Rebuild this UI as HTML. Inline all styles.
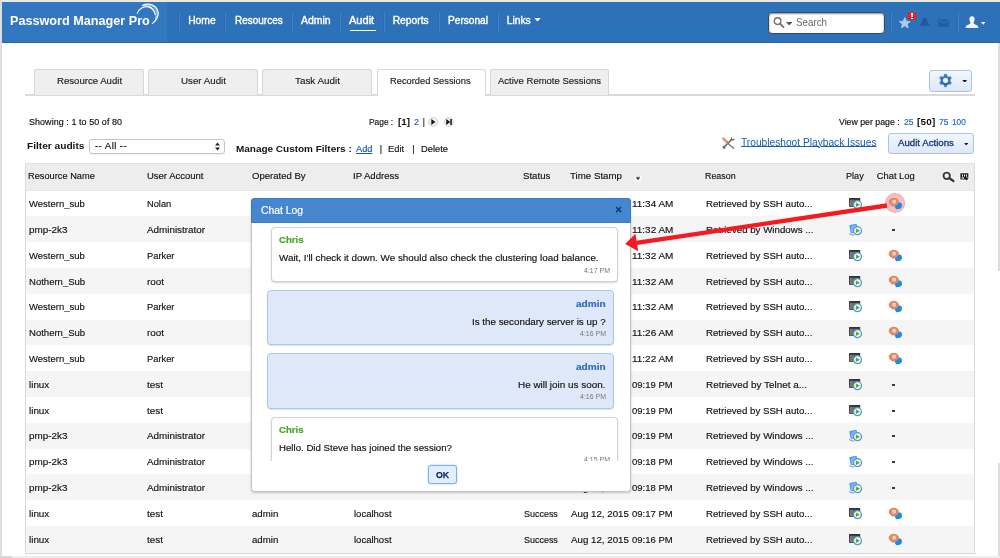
<!DOCTYPE html>
<html>
<head>
<meta charset="utf-8">
<title>Password Manager Pro</title>
<style>
*{box-sizing:border-box;margin:0;padding:0}
html,body{width:1000px;height:558px;overflow:hidden;background:#fff}
body{font-family:"Liberation Sans",sans-serif;font-size:9.1px;color:#111;position:relative}
#page{position:absolute;left:0;top:0;width:1000px;height:558px;overflow:hidden;will-change:transform}
.abs{position:absolute}
.vt{-webkit-text-stroke:.15px currentColor}
#frame-top{left:0;top:0;width:1000px;height:2px;background:#ece9e5}
#frame-left{left:0;top:0;width:2px;height:558px;background:#dedede}
#frame-r1{left:998px;top:43px;width:2px;height:228px;background:#dcdcdc}
#frame-r2{left:998px;top:463px;width:2px;height:95px;background:#dcdcdc}
#frame-b{left:0;top:556px;width:1000px;height:2px;background:#ededed}
#frame-b2{left:0;top:556px;width:12px;height:2px;background:#d8d8d8}
#hdr{left:2px;top:2px;width:998px;height:41px;background:#2d72b8;border-bottom:1px solid #2668ab}
#logo-bg{left:2px;top:2px;width:165px;height:40px;background:#3377c0}
.sep{position:absolute;top:12px;width:1px;height:19.5px;background:#3f80c6;box-shadow:-1px 0 0 #2a6bb0}
#audit-ul{left:349.5px;top:30px;width:26px;height:1px;background:#fff}
#search{left:768px;top:12px;width:117px;height:21.5px;background:#fff;border-radius:4px;border:1px solid #3b4a5a;box-shadow:inset 0 1px 2px rgba(0,0,0,.45)}
.tab{position:absolute;top:69px;height:26px;background:#efefef;border:1px solid #d6d6d6;border-bottom:none;border-radius:3px 3px 0 0}
.tab.act{background:#fff;height:27px;border-color:#d8d8d8}
#tabline{left:25px;top:94px;width:950px;height:1.6px;background:#dadada}
.btn{position:absolute;border-radius:2.5px;background:linear-gradient(#f3f7fd,#dde8f8);border:1px solid #a8c4e8;border-radius:3px}
#thead{left:26px;top:162.5px;width:948.5px;height:28px;background:#ededed;border-top:1.3px solid #e0e0e0;border-bottom:1px solid #e6e6e6}
#tbl-l{left:25px;top:162.5px;width:1px;height:391px;background:#d9d9d9}
#tbl-r{left:974.3px;top:162.5px;width:1.2px;height:391px;background:#dadada}
.row{position:absolute;left:26px;width:948.5px}
.row.alt{background:#f5f5f5}
.ic{position:absolute}
.hl{position:absolute;width:20.2px;height:20.2px;border-radius:50%;background:#f9bcc0;border:1.2px dotted #ee8e95}
#dlg{left:250.8px;top:197.5px;width:380.6px;height:294.2px;background:#fff;border:1.2px solid #c2c2c2;border-radius:3.5px;box-shadow:0 1px 2.5px rgba(0,0,0,.2)}
#dlg-h{left:251px;top:197.5px;width:380px;height:25px;background:#4587cf;border:1px solid #3d7cc4;border-radius:3px 3px 0 0}
.bub{position:absolute;border-radius:4px}
.bub.w{background:#fff;border:1px solid #d2d2d2;box-shadow:0 1px 2px rgba(0,0,0,.16)}
.bub.b{background:#dfe8f8;border:1px solid #a9c6ec;box-shadow:0 1px 1px rgba(0,0,0,.12)}
#ok{left:427.5px;top:465.3px;width:29.6px;height:19.2px;background:#e4eefb;border:1px solid #7db1ea;border-radius:3px;box-shadow:0 0 2px #8fbdf0}

</style>
</head>
<body>
<div id="page">
<svg width="0" height="0" style="position:absolute">
<defs>
<linearGradient id="g-mon" x1="0" y1="0" x2="0" y2="1"><stop offset="0" stop-color="#2f2f2f"/><stop offset="1" stop-color="#5a5a5a"/></linearGradient>
<linearGradient id="g-scr" x1="0" y1="0" x2="1" y2="0"><stop offset="0" stop-color="#808080"/><stop offset="1" stop-color="#444"/></linearGradient>
<linearGradient id="g-win" x1="0" y1="0" x2="1" y2="1"><stop offset="0" stop-color="#4aa3f0"/><stop offset="1" stop-color="#b6dcfa"/></linearGradient>
<g id="i-pl">
<circle cx="9.5" cy="7.7" r="4" fill="#f3faee" stroke="#4f94dc" stroke-width="1.2"/>
<path d="M7.9 5.4 L12 7.7 L7.9 10 Z" fill="#4bb022"/>
</g>
<g id="i-ssh">
<rect x="1" y="1" width="11.2" height="9" rx=".6" fill="url(#g-mon)"/>
<rect x="2" y="2.8" width="9.2" height="6.2" fill="url(#g-scr)"/>
<use href="#i-pl"/>
</g>
<g id="i-win">
<path d="M1.6 10.6 Q3.2 12.2 5.6 11.8" fill="none" stroke="#9aa3ad" stroke-width="1.3" stroke-linecap="round"/>
<path d="M1.8 2.6 L8.2 1.2 L9.3 8 L3.2 9.8 Z" fill="url(#g-win)" stroke="#3f8fe2" stroke-width=".9" stroke-linejoin="round"/>
<use href="#i-pl"/>
</g>
<g id="i-chat">
<ellipse cx="11.3" cy="8.6" rx="3.7" ry="3.4" fill="#1f8ae6"/>
<path d="M9.4 10.6 L8.6 12.6 L12.4 11.6 Z" fill="#1f8ae6"/>
<ellipse cx="6.8" cy="4.8" rx="5.1" ry="4" fill="#db8a62"/>
<path d="M3.8 7.2 L5.8 10 L7.8 8.2 Z" fill="#db8a62"/>
<rect x="5.2" y="2.8" width="3.7" height="3.8" rx=".9" fill="#f4c8bc"/>
</g>
</defs>
</svg>

<div class="abs" id="hdr"></div>
<div class="abs" id="logo-bg"></div>
<div class="abs" id="frame-top"></div>
<div class="abs" id="frame-left"></div>
<div class="abs" id="frame-r1"></div>
<div class="abs" id="frame-r2"></div>
<div class="abs" id="frame-b" style="z-index:5"></div>
<div class="abs" id="frame-b2" style="z-index:5"></div>
<svg class="abs" style="left:0;top:0" width="170" height="30" viewBox="0 0 170 30" fill="none" stroke="#fff" stroke-linecap="round">
<path d="M137.3 13.3 C138.8 8.6 143.8 6 148.4 6.9 C152 7.8 154.4 10.8 155.2 14.6" stroke-width="1.1"/>
<path d="M142.4 5.4 C146.2 3.4 152 3.5 155.4 7 C159.6 11.6 159.4 17.8 152.3 23.6" stroke-width="1.15"/>
<path d="M143.4 6 C147.4 4.4 151.8 5 154.6 8.2 C157.8 12 158 16.4 155.4 20" stroke-width=".8" opacity=".8"/>
<path d="M145 6.4 C148.6 5.6 151.6 6.8 153.6 9.6 C155.8 12.6 156.4 15.4 155.6 18.4" stroke-width=".8" opacity=".65"/>
</svg>

<div class="sep" style="left:179px"></div>
<div class="sep" style="left:225px"></div>
<div class="sep" style="left:292px"></div>
<div class="sep" style="left:340px"></div>
<div class="sep" style="left:384px"></div>
<div class="sep" style="left:439px"></div>
<div class="sep" style="left:498px"></div>
<svg class="abs" style="left:534.2px;top:18.4px" width="7" height="4" viewBox="0 0 8 5"><path d="M0 0H8L4 4.5Z" fill="#fff"/></svg>
<div class="abs" id="audit-ul"></div>

<div class="abs" id="search"></div>
<svg class="abs" style="left:772.6px;top:16px" width="12" height="13" viewBox="0 0 13 14"><circle cx="5" cy="5.5" r="3.6" fill="none" stroke="#707070" stroke-width="1.5"/><path d="M7.6 8.3 L11.3 12" stroke="#707070" stroke-width="2" stroke-linecap="round"/></svg>
<svg class="abs" style="left:786px;top:21.6px" width="6.4" height="3.6" viewBox="0 0 7 4"><path d="M0 0H7L3.5 4Z" fill="#555"/></svg>
<div class="sep" style="left:891px"></div>
<svg class="abs" style="left:899.4px;top:16.8px" width="11.6" height="11.6" viewBox="0 0 14 14"><path d="M7 0.5 L8.9 5 L13.6 5.4 L10 8.5 L11.1 13.2 L7 10.7 L2.9 13.2 L4 8.5 L0.4 5.4 L5.1 5 Z" fill="#a9cbef" stroke="#c9dff5" stroke-width=".7"/></svg>
<div class="abs" style="left:908px;top:12px;width:8px;height:8px;background:#ee1c24"></div>
<div class="abs" style="left:911px;top:13px;width:2px;height:4px;background:#fff"></div>
<div class="abs" style="left:911px;top:18px;width:2px;height:1px;background:#fff"></div>
<svg class="abs" style="left:918.8px;top:16.8px" width="11.4" height="10.6" viewBox="0 0 13 12"><path d="M6.5 0.5 C4 1 3.5 3.5 3.3 6 L1 9 H12 L9.7 6 C9.5 3.5 9 1 6.5 0.5Z" fill="#1e5a9b"/><path d="M5 9.5 H8 L6.5 11.5Z" fill="#1e5a9b"/><path d="M0.5 9.5 H12.5" stroke="#1e5a9b" stroke-width="1"/></svg>
<svg class="abs" style="left:938px;top:19.4px" width="11.4" height="7.8" viewBox="0 0 13 9"><rect x="0" y="0" width="13" height="9" fill="#215f9f"/><path d="M0.5 1 L6.5 5 L12.5 1" fill="none" stroke="#2f74ba" stroke-width="1.2"/></svg>
<div class="sep" style="left:958px"></div>
<svg class="abs" style="left:965px;top:16px" width="14" height="12" viewBox="0 0 14 12"><path d="M7 0.3 C9 0.3 9.8 1.8 9.6 3.6 C9.4 5.2 8.8 6.2 8.4 6.8 C8.6 8 10.5 8.6 12 9.2 C13 9.7 13.3 10.5 13.3 12 H0.7 C0.7 10.5 1 9.7 2 9.2 C3.5 8.6 5.4 8 5.6 6.8 C5.2 6.2 4.6 5.2 4.4 3.6 C4.2 1.8 5 0.3 7 0.3Z" fill="#f6f3ee"/></svg>
<svg class="abs" style="left:981px;top:22.4px" width="4.4" height="2.7" viewBox="0 0 5 3"><path d="M0 0H5L2.5 3Z" fill="#fff"/></svg>

<!-- tabs -->
<div class="abs" id="tabline"></div>
<div class="tab" style="left:34.4px;width:109.6px"></div>
<div class="tab" style="left:148.4px;width:110px"></div>
<div class="tab" style="left:262.4px;width:110px"></div>
<div class="tab act" style="left:376.6px;width:109.4px"></div>
<div class="tab" style="left:490px;width:118.8px"></div>

<div class="btn" style="left:929px;top:70px;width:43px;height:21.6px"></div>
<svg class="abs" style="left:938.2px;top:73.3px" width="15" height="15" viewBox="-7.5 -7.5 15 15">
<defs><linearGradient id="g-gear" x1="0" y1="0" x2="0" y2="1"><stop offset="0" stop-color="#5b9ce2"/><stop offset="1" stop-color="#1d5cab"/></linearGradient></defs>
<g fill="url(#g-gear)">
<circle r="4.9"/>
<g id="tooth"><rect x="-1.6" y="-6.7" width="3.2" height="3.4" rx="1"/></g>
<use href="#tooth" transform="rotate(60)"/><use href="#tooth" transform="rotate(120)"/><use href="#tooth" transform="rotate(180)"/><use href="#tooth" transform="rotate(240)"/><use href="#tooth" transform="rotate(300)"/>
</g>
<circle r="2.5" fill="#fff"/>
</svg>
<svg class="abs" style="left:961.6px;top:79.6px" width="5.4" height="2.8" viewBox="0 0 5 3"><path d="M0 0H5L2.5 3Z" fill="#111"/></svg>

<!-- info line -->
<svg class="abs" style="left:428px;top:117px" width="10" height="10" viewBox="0 0 10 10"><circle cx="5" cy="5" r="4.5" fill="#f1f1f1" stroke="#c9c9c9" stroke-width=".8"/><path d="M3.3 2 L7.4 5 L3.3 8Z" fill="#111"/></svg>
<svg class="abs" style="left:444px;top:117px" width="10" height="10" viewBox="0 0 10 10"><circle cx="5" cy="5" r="4.5" fill="#f1f1f1" stroke="#c9c9c9" stroke-width=".8"/><path d="M2.3 2 L6.2 5 L2.3 8Z" fill="#111"/><rect x="6.3" y="2" width="1.5" height="6" fill="#111"/></svg>

<!-- filter line -->
<div class="abs" style="left:89px;top:139px;width:136px;height:15px;background:#fff;border:1px solid #c4c4c4;border-radius:3px;box-shadow:0 1px 0 rgba(0,0,0,.05)"></div>
<svg class="abs" style="left:215px;top:142px" width="5" height="9" viewBox="0 0 5 9"><path d="M0 3.6H5L2.5 0.4Z M0 5.4H5L2.5 8.6Z" fill="#222"/></svg>
<svg class="abs" style="left:721px;top:136px" width="15" height="14" viewBox="0 0 15 14" fill="none" stroke-linecap="round">
<path d="M10.9 3.2 L3.4 10.8" stroke="#5f5f5f" stroke-width="1.5"/>
<path d="M10.4 1.8 L10.2 3.6 L11.8 4 M13.2 3.2 L11.8 4" stroke="#6a6a6a" stroke-width="1.2"/>
<path d="M2.2 10.4 L3.6 10.8 L3.8 12.4 M2.4 12.2 L2.2 10.4" stroke="#6a6a6a" stroke-width="1.2"/>
<path d="M6.8 7.2 L12.6 12.2" stroke="#777" stroke-width="1.4"/>
<path d="M2.4 2.6 L6.2 6.4" stroke="#e97b52" stroke-width="2.7"/>
<path d="M2.3 2.5 L2.9 3.1" stroke="#f7c4b2" stroke-width="1.1"/>
<path d="M4.2 4.6 L4.9 5.3" stroke="#c9c9c9" stroke-width="2.2" stroke-linecap="butt"/>
</svg>
<div class="btn" style="left:888.3px;top:132.6px;width:86px;height:21.4px"></div>
<svg class="abs" style="left:963.6px;top:142.6px" width="4.4" height="2.6" viewBox="0 0 5 3"><path d="M0 0H5L2.5 3Z" fill="#222"/></svg>

<!-- table -->
<div class="abs" id="thead"></div>
<svg class="abs" style="left:633.6px;top:173.6px" width="8" height="8" viewBox="0 0 8 8"><ellipse cx="4" cy="4.2" rx="3.6" ry="3.6" fill="#fff" opacity=".9"/><rect x="2" y="1.7" width="4" height=".7" fill="#aaa"/><path d="M1.8 3.2 H6.2 L4 6.2Z" fill="#333"/></svg>
<svg class="abs" style="left:941px;top:169.6px" width="15" height="14" viewBox="0 0 15 14"><g stroke="#fff" stroke-width="3.6" opacity=".85" fill="none" stroke-linecap="round"><circle cx="5.7" cy="5.8" r="3.2"/><path d="M8.3 8.2 L12.6 11.2"/></g><circle cx="5.7" cy="5.8" r="3.2" fill="none" stroke="#3a3a3a" stroke-width="1.95"/><path d="M8.4 8.2 L12.4 11" stroke="#3a3a3a" stroke-width="2.5" stroke-linecap="round"/></svg>
<svg class="abs" style="left:958.8px;top:172px" width="11" height="10" viewBox="0 0 11 10"><rect x=".4" y=".4" width="10" height="8.6" rx="1.6" fill="#fff" opacity=".85"/><path d="M1.4 1.3 H9.4 V5.6 H7.4 V7.6 H1.4Z" fill="#1a1a1a"/><path d="M5.6 6 H9.8 L7.7 8.4Z" fill="#1a1a1a"/><rect x="3" y="2.4" width="1" height="2.2" fill="#eee"/><rect x="5" y="2.4" width="1" height="2.2" fill="#eee"/><rect x="7" y="2.4" width="1" height="2.2" fill="#eee"/><rect x="2.6" y="5.4" width="2.4" height="1.2" fill="#eee"/></svg>

<div class="row" style="top:190.40px;height:25.80px"></div>
<div class="row alt" style="top:216.22px;height:25.80px"></div>
<div class="row" style="top:242.04px;height:25.80px"></div>
<div class="row alt" style="top:267.86px;height:25.80px"></div>
<div class="row" style="top:293.68px;height:25.80px"></div>
<div class="row alt" style="top:319.50px;height:25.80px"></div>
<div class="row" style="top:345.32px;height:25.80px"></div>
<div class="row alt" style="top:371.14px;height:25.80px"></div>
<div class="row" style="top:396.96px;height:25.80px"></div>
<div class="row alt" style="top:422.78px;height:25.80px"></div>
<div class="row" style="top:448.60px;height:25.80px"></div>
<div class="row alt" style="top:474.42px;height:25.80px"></div>
<div class="row" style="top:500.24px;height:25.80px"></div>
<div class="row alt" style="top:526.06px;height:27.00px"></div>
<div class="vt" style="position:absolute;left:28.50px;top:199.00px;font-size:9.4px;line-height:1;letter-spacing:0.000px;color:#111;white-space:nowrap;transform:scaleX(1.0125);transform-origin:0 50%;">Western_sub</div>
<div class="vt" style="position:absolute;left:147.10px;top:199.00px;font-size:9.4px;line-height:1;letter-spacing:0.000px;color:#111;white-space:nowrap;transform:scaleX(0.9875);transform-origin:0 50%;">Nolan</div>
<div class="vt" style="position:absolute;left:252.10px;top:199.00px;font-size:9.4px;line-height:1;letter-spacing:0.000px;color:#111;white-space:nowrap;transform:scaleX(1.0274);transform-origin:0 50%;">admin</div>
<div class="vt" style="position:absolute;left:353.60px;top:199.00px;font-size:9.4px;line-height:1;letter-spacing:0.000px;color:#111;white-space:nowrap;transform:scaleX(1.0147);transform-origin:0 50%;">localhost</div>
<div class="vt" style="position:absolute;left:523.70px;top:199.00px;font-size:9.4px;line-height:1;letter-spacing:0.000px;color:#111;white-space:nowrap;transform:scaleX(0.9553);transform-origin:0 50%;">Success</div>
<div class="vt" style="position:absolute;left:570.50px;top:199.00px;font-size:9.4px;line-height:1;letter-spacing:-0.000px;color:#111;white-space:nowrap;transform:scaleX(1.0387);transform-origin:0 50%;">Aug 12, 2015</div>
<div class="vt" style="position:absolute;left:632.30px;top:199.00px;font-size:9.4px;line-height:1;letter-spacing:0.000px;color:#111;white-space:nowrap;transform:scaleX(1.0624);transform-origin:0 50%;">11:34 AM</div>
<div class="vt" style="position:absolute;left:706.10px;top:199.00px;font-size:9.4px;line-height:1;letter-spacing:0.000px;color:#111;white-space:nowrap;transform:scaleX(1.0310);transform-origin:0 50%;">Retrieved by SSH auto...</div>
<svg class="ic" style="left:848px;top:197px" width="15" height="13" viewBox="0 0 15 13"><use href="#i-ssh"/></svg>
<div class="hl" style="left:884.7px;top:193.0px"></div>
<svg class="ic" style="left:887px;top:197px" width="16" height="14" viewBox="0 0 16 14"><use href="#i-chat"/></svg>
<div class="vt" style="position:absolute;left:28.50px;top:225.00px;font-size:9.4px;line-height:1;letter-spacing:0.000px;color:#111;white-space:nowrap;transform:scaleX(1.0540);transform-origin:0 50%;">pmp-2k3</div>
<div class="vt" style="position:absolute;left:147.10px;top:225.00px;font-size:9.4px;line-height:1;letter-spacing:-0.000px;color:#111;white-space:nowrap;transform:scaleX(1.0502);transform-origin:0 50%;">Administrator</div>
<div class="vt" style="position:absolute;left:252.10px;top:225.00px;font-size:9.4px;line-height:1;letter-spacing:0.000px;color:#111;white-space:nowrap;transform:scaleX(1.0274);transform-origin:0 50%;">admin</div>
<div class="vt" style="position:absolute;left:353.60px;top:225.00px;font-size:9.4px;line-height:1;letter-spacing:0.000px;color:#111;white-space:nowrap;transform:scaleX(1.0147);transform-origin:0 50%;">localhost</div>
<div class="vt" style="position:absolute;left:523.70px;top:225.00px;font-size:9.4px;line-height:1;letter-spacing:0.000px;color:#111;white-space:nowrap;transform:scaleX(0.9553);transform-origin:0 50%;">Success</div>
<div class="vt" style="position:absolute;left:570.50px;top:225.00px;font-size:9.4px;line-height:1;letter-spacing:-0.000px;color:#111;white-space:nowrap;transform:scaleX(1.0387);transform-origin:0 50%;">Aug 12, 2015</div>
<div class="vt" style="position:absolute;left:632.30px;top:225.00px;font-size:9.4px;line-height:1;letter-spacing:0.000px;color:#111;white-space:nowrap;transform:scaleX(1.0624);transform-origin:0 50%;">11:32 AM</div>
<div class="vt" style="position:absolute;left:706.10px;top:225.00px;font-size:9.4px;line-height:1;letter-spacing:0.000px;color:#111;white-space:nowrap;transform:scaleX(1.0351);transform-origin:0 50%;">Retrieved by Windows ...</div>
<svg class="ic" style="left:848px;top:223px" width="15" height="13" viewBox="0 0 15 13"><use href="#i-win"/></svg>
<div class="abs" style="left:892.2px;top:229.2px;width:3.2px;height:1.5px;background:#3a3a3a"></div>
<div class="vt" style="position:absolute;left:28.50px;top:251.00px;font-size:9.4px;line-height:1;letter-spacing:0.000px;color:#111;white-space:nowrap;transform:scaleX(1.0125);transform-origin:0 50%;">Western_sub</div>
<div class="vt" style="position:absolute;left:147.10px;top:251.00px;font-size:9.4px;line-height:1;letter-spacing:0.000px;color:#111;white-space:nowrap;transform:scaleX(0.9939);transform-origin:0 50%;">Parker</div>
<div class="vt" style="position:absolute;left:252.10px;top:251.00px;font-size:9.4px;line-height:1;letter-spacing:0.000px;color:#111;white-space:nowrap;transform:scaleX(1.0274);transform-origin:0 50%;">admin</div>
<div class="vt" style="position:absolute;left:353.60px;top:251.00px;font-size:9.4px;line-height:1;letter-spacing:0.000px;color:#111;white-space:nowrap;transform:scaleX(1.0147);transform-origin:0 50%;">localhost</div>
<div class="vt" style="position:absolute;left:523.70px;top:251.00px;font-size:9.4px;line-height:1;letter-spacing:0.000px;color:#111;white-space:nowrap;transform:scaleX(0.9553);transform-origin:0 50%;">Success</div>
<div class="vt" style="position:absolute;left:570.50px;top:251.00px;font-size:9.4px;line-height:1;letter-spacing:-0.000px;color:#111;white-space:nowrap;transform:scaleX(1.0387);transform-origin:0 50%;">Aug 12, 2015</div>
<div class="vt" style="position:absolute;left:632.30px;top:251.00px;font-size:9.4px;line-height:1;letter-spacing:0.000px;color:#111;white-space:nowrap;transform:scaleX(1.0624);transform-origin:0 50%;">11:32 AM</div>
<div class="vt" style="position:absolute;left:706.10px;top:251.00px;font-size:9.4px;line-height:1;letter-spacing:0.000px;color:#111;white-space:nowrap;transform:scaleX(1.0310);transform-origin:0 50%;">Retrieved by SSH auto...</div>
<svg class="ic" style="left:848px;top:249px" width="15" height="13" viewBox="0 0 15 13"><use href="#i-ssh"/></svg>
<svg class="ic" style="left:887px;top:249px" width="16" height="14" viewBox="0 0 16 14"><use href="#i-chat"/></svg>
<div class="vt" style="position:absolute;left:28.50px;top:277.00px;font-size:9.4px;line-height:1;letter-spacing:0.000px;color:#111;white-space:nowrap;transform:scaleX(1.0163);transform-origin:0 50%;">Nothern_Sub</div>
<div class="vt" style="position:absolute;left:147.10px;top:277.00px;font-size:9.4px;line-height:1;letter-spacing:0.000px;color:#111;white-space:nowrap;transform:scaleX(1.0608);transform-origin:0 50%;">root</div>
<div class="vt" style="position:absolute;left:252.10px;top:277.00px;font-size:9.4px;line-height:1;letter-spacing:0.000px;color:#111;white-space:nowrap;transform:scaleX(1.0274);transform-origin:0 50%;">admin</div>
<div class="vt" style="position:absolute;left:353.60px;top:277.00px;font-size:9.4px;line-height:1;letter-spacing:0.000px;color:#111;white-space:nowrap;transform:scaleX(1.0147);transform-origin:0 50%;">localhost</div>
<div class="vt" style="position:absolute;left:523.70px;top:277.00px;font-size:9.4px;line-height:1;letter-spacing:0.000px;color:#111;white-space:nowrap;transform:scaleX(0.9553);transform-origin:0 50%;">Success</div>
<div class="vt" style="position:absolute;left:570.50px;top:277.00px;font-size:9.4px;line-height:1;letter-spacing:-0.000px;color:#111;white-space:nowrap;transform:scaleX(1.0387);transform-origin:0 50%;">Aug 12, 2015</div>
<div class="vt" style="position:absolute;left:632.30px;top:277.00px;font-size:9.4px;line-height:1;letter-spacing:0.000px;color:#111;white-space:nowrap;transform:scaleX(1.0624);transform-origin:0 50%;">11:32 AM</div>
<div class="vt" style="position:absolute;left:706.10px;top:277.00px;font-size:9.4px;line-height:1;letter-spacing:0.000px;color:#111;white-space:nowrap;transform:scaleX(1.0310);transform-origin:0 50%;">Retrieved by SSH auto...</div>
<svg class="ic" style="left:848px;top:275px" width="15" height="13" viewBox="0 0 15 13"><use href="#i-ssh"/></svg>
<svg class="ic" style="left:887px;top:275px" width="16" height="14" viewBox="0 0 16 14"><use href="#i-chat"/></svg>
<div class="vt" style="position:absolute;left:28.50px;top:302.00px;font-size:9.4px;line-height:1;letter-spacing:0.000px;color:#111;white-space:nowrap;transform:scaleX(1.0125);transform-origin:0 50%;">Western_sub</div>
<div class="vt" style="position:absolute;left:147.10px;top:302.00px;font-size:9.4px;line-height:1;letter-spacing:0.000px;color:#111;white-space:nowrap;transform:scaleX(0.9939);transform-origin:0 50%;">Parker</div>
<div class="vt" style="position:absolute;left:252.10px;top:302.00px;font-size:9.4px;line-height:1;letter-spacing:0.000px;color:#111;white-space:nowrap;transform:scaleX(1.0274);transform-origin:0 50%;">admin</div>
<div class="vt" style="position:absolute;left:353.60px;top:302.00px;font-size:9.4px;line-height:1;letter-spacing:0.000px;color:#111;white-space:nowrap;transform:scaleX(1.0147);transform-origin:0 50%;">localhost</div>
<div class="vt" style="position:absolute;left:523.70px;top:302.00px;font-size:9.4px;line-height:1;letter-spacing:0.000px;color:#111;white-space:nowrap;transform:scaleX(0.9553);transform-origin:0 50%;">Success</div>
<div class="vt" style="position:absolute;left:570.50px;top:302.00px;font-size:9.4px;line-height:1;letter-spacing:-0.000px;color:#111;white-space:nowrap;transform:scaleX(1.0387);transform-origin:0 50%;">Aug 12, 2015</div>
<div class="vt" style="position:absolute;left:632.30px;top:302.00px;font-size:9.4px;line-height:1;letter-spacing:0.000px;color:#111;white-space:nowrap;transform:scaleX(1.0624);transform-origin:0 50%;">11:32 AM</div>
<div class="vt" style="position:absolute;left:706.10px;top:302.00px;font-size:9.4px;line-height:1;letter-spacing:0.000px;color:#111;white-space:nowrap;transform:scaleX(1.0310);transform-origin:0 50%;">Retrieved by SSH auto...</div>
<svg class="ic" style="left:848px;top:300px" width="15" height="13" viewBox="0 0 15 13"><use href="#i-ssh"/></svg>
<svg class="ic" style="left:887px;top:300px" width="16" height="14" viewBox="0 0 16 14"><use href="#i-chat"/></svg>
<div class="vt" style="position:absolute;left:28.50px;top:328.00px;font-size:9.4px;line-height:1;letter-spacing:0.000px;color:#111;white-space:nowrap;transform:scaleX(1.0163);transform-origin:0 50%;">Nothern_Sub</div>
<div class="vt" style="position:absolute;left:147.10px;top:328.00px;font-size:9.4px;line-height:1;letter-spacing:0.000px;color:#111;white-space:nowrap;transform:scaleX(1.0608);transform-origin:0 50%;">root</div>
<div class="vt" style="position:absolute;left:252.10px;top:328.00px;font-size:9.4px;line-height:1;letter-spacing:0.000px;color:#111;white-space:nowrap;transform:scaleX(1.0274);transform-origin:0 50%;">admin</div>
<div class="vt" style="position:absolute;left:353.60px;top:328.00px;font-size:9.4px;line-height:1;letter-spacing:0.000px;color:#111;white-space:nowrap;transform:scaleX(1.0147);transform-origin:0 50%;">localhost</div>
<div class="vt" style="position:absolute;left:523.70px;top:328.00px;font-size:9.4px;line-height:1;letter-spacing:0.000px;color:#111;white-space:nowrap;transform:scaleX(0.9553);transform-origin:0 50%;">Success</div>
<div class="vt" style="position:absolute;left:570.50px;top:328.00px;font-size:9.4px;line-height:1;letter-spacing:-0.000px;color:#111;white-space:nowrap;transform:scaleX(1.0387);transform-origin:0 50%;">Aug 12, 2015</div>
<div class="vt" style="position:absolute;left:632.30px;top:328.00px;font-size:9.4px;line-height:1;letter-spacing:0.000px;color:#111;white-space:nowrap;transform:scaleX(1.0624);transform-origin:0 50%;">11:26 AM</div>
<div class="vt" style="position:absolute;left:706.10px;top:328.00px;font-size:9.4px;line-height:1;letter-spacing:0.000px;color:#111;white-space:nowrap;transform:scaleX(1.0310);transform-origin:0 50%;">Retrieved by SSH auto...</div>
<svg class="ic" style="left:848px;top:326px" width="15" height="13" viewBox="0 0 15 13"><use href="#i-ssh"/></svg>
<svg class="ic" style="left:887px;top:326px" width="16" height="14" viewBox="0 0 16 14"><use href="#i-chat"/></svg>
<div class="vt" style="position:absolute;left:28.50px;top:354.00px;font-size:9.4px;line-height:1;letter-spacing:0.000px;color:#111;white-space:nowrap;transform:scaleX(1.0125);transform-origin:0 50%;">Western_sub</div>
<div class="vt" style="position:absolute;left:147.10px;top:354.00px;font-size:9.4px;line-height:1;letter-spacing:0.000px;color:#111;white-space:nowrap;transform:scaleX(0.9939);transform-origin:0 50%;">Parker</div>
<div class="vt" style="position:absolute;left:252.10px;top:354.00px;font-size:9.4px;line-height:1;letter-spacing:0.000px;color:#111;white-space:nowrap;transform:scaleX(1.0274);transform-origin:0 50%;">admin</div>
<div class="vt" style="position:absolute;left:353.60px;top:354.00px;font-size:9.4px;line-height:1;letter-spacing:0.000px;color:#111;white-space:nowrap;transform:scaleX(1.0147);transform-origin:0 50%;">localhost</div>
<div class="vt" style="position:absolute;left:523.70px;top:354.00px;font-size:9.4px;line-height:1;letter-spacing:0.000px;color:#111;white-space:nowrap;transform:scaleX(0.9553);transform-origin:0 50%;">Success</div>
<div class="vt" style="position:absolute;left:570.50px;top:354.00px;font-size:9.4px;line-height:1;letter-spacing:-0.000px;color:#111;white-space:nowrap;transform:scaleX(1.0387);transform-origin:0 50%;">Aug 12, 2015</div>
<div class="vt" style="position:absolute;left:632.30px;top:354.00px;font-size:9.4px;line-height:1;letter-spacing:0.000px;color:#111;white-space:nowrap;transform:scaleX(1.0624);transform-origin:0 50%;">11:22 AM</div>
<div class="vt" style="position:absolute;left:706.10px;top:354.00px;font-size:9.4px;line-height:1;letter-spacing:0.000px;color:#111;white-space:nowrap;transform:scaleX(1.0310);transform-origin:0 50%;">Retrieved by SSH auto...</div>
<svg class="ic" style="left:848px;top:352px" width="15" height="13" viewBox="0 0 15 13"><use href="#i-ssh"/></svg>
<svg class="ic" style="left:887px;top:352px" width="16" height="14" viewBox="0 0 16 14"><use href="#i-chat"/></svg>
<div class="vt" style="position:absolute;left:28.50px;top:380.00px;font-size:9.4px;line-height:1;letter-spacing:0.000px;color:#111;white-space:nowrap;transform:scaleX(1.0528);transform-origin:0 50%;">linux</div>
<div class="vt" style="position:absolute;left:147.10px;top:380.00px;font-size:9.4px;line-height:1;letter-spacing:0.000px;color:#111;white-space:nowrap;transform:scaleX(1.0599);transform-origin:0 50%;">test</div>
<div class="vt" style="position:absolute;left:252.10px;top:380.00px;font-size:9.4px;line-height:1;letter-spacing:0.000px;color:#111;white-space:nowrap;transform:scaleX(1.0274);transform-origin:0 50%;">admin</div>
<div class="vt" style="position:absolute;left:353.60px;top:380.00px;font-size:9.4px;line-height:1;letter-spacing:0.000px;color:#111;white-space:nowrap;transform:scaleX(1.0147);transform-origin:0 50%;">localhost</div>
<div class="vt" style="position:absolute;left:523.70px;top:380.00px;font-size:9.4px;line-height:1;letter-spacing:0.000px;color:#111;white-space:nowrap;transform:scaleX(0.9553);transform-origin:0 50%;">Success</div>
<div class="vt" style="position:absolute;left:570.50px;top:380.00px;font-size:9.4px;line-height:1;letter-spacing:-0.000px;color:#111;white-space:nowrap;transform:scaleX(1.0387);transform-origin:0 50%;">Aug 12, 2015</div>
<div class="vt" style="position:absolute;left:632.30px;top:380.00px;font-size:9.4px;line-height:1;letter-spacing:0.000px;color:#111;white-space:nowrap;transform:scaleX(1.0130);transform-origin:0 50%;">09:19 PM</div>
<div class="vt" style="position:absolute;left:706.10px;top:380.00px;font-size:9.4px;line-height:1;letter-spacing:0.000px;color:#111;white-space:nowrap;transform:scaleX(1.0541);transform-origin:0 50%;">Retrieved by Telnet a...</div>
<svg class="ic" style="left:848px;top:378px" width="15" height="13" viewBox="0 0 15 13"><use href="#i-ssh"/></svg>
<div class="abs" style="left:892.2px;top:384.2px;width:3.2px;height:1.5px;background:#3a3a3a"></div>
<div class="vt" style="position:absolute;left:28.50px;top:406.00px;font-size:9.4px;line-height:1;letter-spacing:0.000px;color:#111;white-space:nowrap;transform:scaleX(1.0528);transform-origin:0 50%;">linux</div>
<div class="vt" style="position:absolute;left:147.10px;top:406.00px;font-size:9.4px;line-height:1;letter-spacing:0.000px;color:#111;white-space:nowrap;transform:scaleX(1.0599);transform-origin:0 50%;">test</div>
<div class="vt" style="position:absolute;left:252.10px;top:406.00px;font-size:9.4px;line-height:1;letter-spacing:0.000px;color:#111;white-space:nowrap;transform:scaleX(1.0274);transform-origin:0 50%;">admin</div>
<div class="vt" style="position:absolute;left:353.60px;top:406.00px;font-size:9.4px;line-height:1;letter-spacing:0.000px;color:#111;white-space:nowrap;transform:scaleX(1.0147);transform-origin:0 50%;">localhost</div>
<div class="vt" style="position:absolute;left:523.70px;top:406.00px;font-size:9.4px;line-height:1;letter-spacing:0.000px;color:#111;white-space:nowrap;transform:scaleX(0.9553);transform-origin:0 50%;">Success</div>
<div class="vt" style="position:absolute;left:570.50px;top:406.00px;font-size:9.4px;line-height:1;letter-spacing:-0.000px;color:#111;white-space:nowrap;transform:scaleX(1.0387);transform-origin:0 50%;">Aug 12, 2015</div>
<div class="vt" style="position:absolute;left:632.30px;top:406.00px;font-size:9.4px;line-height:1;letter-spacing:0.000px;color:#111;white-space:nowrap;transform:scaleX(1.0130);transform-origin:0 50%;">09:19 PM</div>
<div class="vt" style="position:absolute;left:706.10px;top:406.00px;font-size:9.4px;line-height:1;letter-spacing:0.000px;color:#111;white-space:nowrap;transform:scaleX(1.0310);transform-origin:0 50%;">Retrieved by SSH auto...</div>
<svg class="ic" style="left:848px;top:404px" width="15" height="13" viewBox="0 0 15 13"><use href="#i-ssh"/></svg>
<div class="abs" style="left:892.2px;top:410.2px;width:3.2px;height:1.5px;background:#3a3a3a"></div>
<div class="vt" style="position:absolute;left:28.50px;top:431.00px;font-size:9.4px;line-height:1;letter-spacing:0.000px;color:#111;white-space:nowrap;transform:scaleX(1.0540);transform-origin:0 50%;">pmp-2k3</div>
<div class="vt" style="position:absolute;left:147.10px;top:431.00px;font-size:9.4px;line-height:1;letter-spacing:-0.000px;color:#111;white-space:nowrap;transform:scaleX(1.0502);transform-origin:0 50%;">Administrator</div>
<div class="vt" style="position:absolute;left:252.10px;top:431.00px;font-size:9.4px;line-height:1;letter-spacing:0.000px;color:#111;white-space:nowrap;transform:scaleX(1.0274);transform-origin:0 50%;">admin</div>
<div class="vt" style="position:absolute;left:353.60px;top:431.00px;font-size:9.4px;line-height:1;letter-spacing:0.000px;color:#111;white-space:nowrap;transform:scaleX(1.0147);transform-origin:0 50%;">localhost</div>
<div class="vt" style="position:absolute;left:523.70px;top:431.00px;font-size:9.4px;line-height:1;letter-spacing:0.000px;color:#111;white-space:nowrap;transform:scaleX(0.9553);transform-origin:0 50%;">Success</div>
<div class="vt" style="position:absolute;left:570.50px;top:431.00px;font-size:9.4px;line-height:1;letter-spacing:-0.000px;color:#111;white-space:nowrap;transform:scaleX(1.0387);transform-origin:0 50%;">Aug 12, 2015</div>
<div class="vt" style="position:absolute;left:632.30px;top:431.00px;font-size:9.4px;line-height:1;letter-spacing:0.000px;color:#111;white-space:nowrap;transform:scaleX(1.0130);transform-origin:0 50%;">09:19 PM</div>
<div class="vt" style="position:absolute;left:706.10px;top:431.00px;font-size:9.4px;line-height:1;letter-spacing:0.000px;color:#111;white-space:nowrap;transform:scaleX(1.0351);transform-origin:0 50%;">Retrieved by Windows ...</div>
<svg class="ic" style="left:848px;top:429px" width="15" height="13" viewBox="0 0 15 13"><use href="#i-win"/></svg>
<div class="abs" style="left:892.2px;top:435.2px;width:3.2px;height:1.5px;background:#3a3a3a"></div>
<div class="vt" style="position:absolute;left:28.50px;top:457.00px;font-size:9.4px;line-height:1;letter-spacing:0.000px;color:#111;white-space:nowrap;transform:scaleX(1.0540);transform-origin:0 50%;">pmp-2k3</div>
<div class="vt" style="position:absolute;left:147.10px;top:457.00px;font-size:9.4px;line-height:1;letter-spacing:-0.000px;color:#111;white-space:nowrap;transform:scaleX(1.0502);transform-origin:0 50%;">Administrator</div>
<div class="vt" style="position:absolute;left:252.10px;top:457.00px;font-size:9.4px;line-height:1;letter-spacing:0.000px;color:#111;white-space:nowrap;transform:scaleX(1.0274);transform-origin:0 50%;">admin</div>
<div class="vt" style="position:absolute;left:353.60px;top:457.00px;font-size:9.4px;line-height:1;letter-spacing:0.000px;color:#111;white-space:nowrap;transform:scaleX(1.0147);transform-origin:0 50%;">localhost</div>
<div class="vt" style="position:absolute;left:523.70px;top:457.00px;font-size:9.4px;line-height:1;letter-spacing:0.000px;color:#111;white-space:nowrap;transform:scaleX(0.9553);transform-origin:0 50%;">Success</div>
<div class="vt" style="position:absolute;left:570.50px;top:457.00px;font-size:9.4px;line-height:1;letter-spacing:-0.000px;color:#111;white-space:nowrap;transform:scaleX(1.0387);transform-origin:0 50%;">Aug 12, 2015</div>
<div class="vt" style="position:absolute;left:632.30px;top:457.00px;font-size:9.4px;line-height:1;letter-spacing:0.000px;color:#111;white-space:nowrap;transform:scaleX(1.0130);transform-origin:0 50%;">09:18 PM</div>
<div class="vt" style="position:absolute;left:706.10px;top:457.00px;font-size:9.4px;line-height:1;letter-spacing:0.000px;color:#111;white-space:nowrap;transform:scaleX(1.0351);transform-origin:0 50%;">Retrieved by Windows ...</div>
<svg class="ic" style="left:848px;top:455px" width="15" height="13" viewBox="0 0 15 13"><use href="#i-win"/></svg>
<div class="abs" style="left:892.2px;top:461.2px;width:3.2px;height:1.5px;background:#3a3a3a"></div>
<div class="vt" style="position:absolute;left:28.50px;top:483.00px;font-size:9.4px;line-height:1;letter-spacing:0.000px;color:#111;white-space:nowrap;transform:scaleX(1.0540);transform-origin:0 50%;">pmp-2k3</div>
<div class="vt" style="position:absolute;left:147.10px;top:483.00px;font-size:9.4px;line-height:1;letter-spacing:-0.000px;color:#111;white-space:nowrap;transform:scaleX(1.0502);transform-origin:0 50%;">Administrator</div>
<div class="vt" style="position:absolute;left:252.10px;top:483.00px;font-size:9.4px;line-height:1;letter-spacing:0.000px;color:#111;white-space:nowrap;transform:scaleX(1.0274);transform-origin:0 50%;">admin</div>
<div class="vt" style="position:absolute;left:353.60px;top:483.00px;font-size:9.4px;line-height:1;letter-spacing:0.000px;color:#111;white-space:nowrap;transform:scaleX(1.0147);transform-origin:0 50%;">localhost</div>
<div class="vt" style="position:absolute;left:523.70px;top:483.00px;font-size:9.4px;line-height:1;letter-spacing:0.000px;color:#111;white-space:nowrap;transform:scaleX(0.9553);transform-origin:0 50%;">Success</div>
<div class="vt" style="position:absolute;left:570.50px;top:483.00px;font-size:9.4px;line-height:1;letter-spacing:-0.000px;color:#111;white-space:nowrap;transform:scaleX(1.0387);transform-origin:0 50%;">Aug 12, 2015</div>
<div class="vt" style="position:absolute;left:632.30px;top:483.00px;font-size:9.4px;line-height:1;letter-spacing:0.000px;color:#111;white-space:nowrap;transform:scaleX(1.0130);transform-origin:0 50%;">09:18 PM</div>
<div class="vt" style="position:absolute;left:706.10px;top:483.00px;font-size:9.4px;line-height:1;letter-spacing:0.000px;color:#111;white-space:nowrap;transform:scaleX(1.0351);transform-origin:0 50%;">Retrieved by Windows ...</div>
<svg class="ic" style="left:848px;top:481px" width="15" height="13" viewBox="0 0 15 13"><use href="#i-win"/></svg>
<div class="abs" style="left:892.2px;top:487.2px;width:3.2px;height:1.5px;background:#3a3a3a"></div>
<div class="vt" style="position:absolute;left:28.50px;top:509.00px;font-size:9.4px;line-height:1;letter-spacing:0.000px;color:#111;white-space:nowrap;transform:scaleX(1.0528);transform-origin:0 50%;">linux</div>
<div class="vt" style="position:absolute;left:147.10px;top:509.00px;font-size:9.4px;line-height:1;letter-spacing:0.000px;color:#111;white-space:nowrap;transform:scaleX(1.0599);transform-origin:0 50%;">test</div>
<div class="vt" style="position:absolute;left:252.10px;top:509.00px;font-size:9.4px;line-height:1;letter-spacing:0.000px;color:#111;white-space:nowrap;transform:scaleX(1.0274);transform-origin:0 50%;">admin</div>
<div class="vt" style="position:absolute;left:353.60px;top:509.00px;font-size:9.4px;line-height:1;letter-spacing:0.000px;color:#111;white-space:nowrap;transform:scaleX(1.0147);transform-origin:0 50%;">localhost</div>
<div class="vt" style="position:absolute;left:523.70px;top:509.00px;font-size:9.4px;line-height:1;letter-spacing:0.000px;color:#111;white-space:nowrap;transform:scaleX(0.9553);transform-origin:0 50%;">Success</div>
<div class="vt" style="position:absolute;left:570.50px;top:509.00px;font-size:9.4px;line-height:1;letter-spacing:-0.000px;color:#111;white-space:nowrap;transform:scaleX(1.0387);transform-origin:0 50%;">Aug 12, 2015</div>
<div class="vt" style="position:absolute;left:632.30px;top:509.00px;font-size:9.4px;line-height:1;letter-spacing:0.000px;color:#111;white-space:nowrap;transform:scaleX(1.0130);transform-origin:0 50%;">09:17 PM</div>
<div class="vt" style="position:absolute;left:706.10px;top:509.00px;font-size:9.4px;line-height:1;letter-spacing:0.000px;color:#111;white-space:nowrap;transform:scaleX(1.0310);transform-origin:0 50%;">Retrieved by SSH auto...</div>
<svg class="ic" style="left:848px;top:507px" width="15" height="13" viewBox="0 0 15 13"><use href="#i-ssh"/></svg>
<svg class="ic" style="left:887px;top:507px" width="16" height="14" viewBox="0 0 16 14"><use href="#i-chat"/></svg>
<div class="vt" style="position:absolute;left:28.50px;top:535.00px;font-size:9.4px;line-height:1;letter-spacing:0.000px;color:#111;white-space:nowrap;transform:scaleX(1.0528);transform-origin:0 50%;">linux</div>
<div class="vt" style="position:absolute;left:147.10px;top:535.00px;font-size:9.4px;line-height:1;letter-spacing:0.000px;color:#111;white-space:nowrap;transform:scaleX(1.0599);transform-origin:0 50%;">test</div>
<div class="vt" style="position:absolute;left:252.10px;top:535.00px;font-size:9.4px;line-height:1;letter-spacing:0.000px;color:#111;white-space:nowrap;transform:scaleX(1.0274);transform-origin:0 50%;">admin</div>
<div class="vt" style="position:absolute;left:353.60px;top:535.00px;font-size:9.4px;line-height:1;letter-spacing:0.000px;color:#111;white-space:nowrap;transform:scaleX(1.0147);transform-origin:0 50%;">localhost</div>
<div class="vt" style="position:absolute;left:523.70px;top:535.00px;font-size:9.4px;line-height:1;letter-spacing:0.000px;color:#111;white-space:nowrap;transform:scaleX(0.9553);transform-origin:0 50%;">Success</div>
<div class="vt" style="position:absolute;left:570.50px;top:535.00px;font-size:9.4px;line-height:1;letter-spacing:-0.000px;color:#111;white-space:nowrap;transform:scaleX(1.0387);transform-origin:0 50%;">Aug 12, 2015</div>
<div class="vt" style="position:absolute;left:632.30px;top:535.00px;font-size:9.4px;line-height:1;letter-spacing:0.000px;color:#111;white-space:nowrap;transform:scaleX(1.0130);transform-origin:0 50%;">09:16 PM</div>
<div class="vt" style="position:absolute;left:706.10px;top:535.00px;font-size:9.4px;line-height:1;letter-spacing:0.000px;color:#111;white-space:nowrap;transform:scaleX(1.0310);transform-origin:0 50%;">Retrieved by SSH auto...</div>
<svg class="ic" style="left:848px;top:533px" width="15" height="13" viewBox="0 0 15 13"><use href="#i-ssh"/></svg>
<svg class="ic" style="left:887px;top:533px" width="16" height="14" viewBox="0 0 16 14"><use href="#i-chat"/></svg>
<div class="abs" id="tbl-l"></div>
<div class="abs" id="tbl-r"></div>
<div class="abs" style="left:25px;top:552.6px;width:950.5px;height:1.2px;background:#d6d6d6"></div>
<div class="abs" style="left:25px;top:553.8px;width:951px;height:4.2px;background:#fff"></div>

<!-- dialog -->
<div class="abs" id="dlg"></div>
<div class="abs" id="dlg-h"></div>
<svg class="abs" style="left:614.6px;top:206.4px" width="7.2" height="7.2" viewBox="0 0 8 8"><path d="M1.2 1.2 L6.8 6.8 M6.8 1.2 L1.2 6.8" stroke="#0e3b78" stroke-width="1.7"/></svg>
<div class="abs" style="left:0;top:0;width:1000px;height:460.8px;overflow:hidden">
 <div class="bub w" style="left:271.2px;top:227px;width:346.6px;height:55.4px"></div>
 <div class="bub b" style="left:267px;top:290.4px;width:346.8px;height:54.8px"></div>
 <div class="bub b" style="left:267px;top:353.4px;width:346.8px;height:55.2px"></div>
 <div class="bub w" style="left:271.2px;top:417px;width:346.6px;height:55.4px"></div>
<div style="position:absolute;left:278.70px;top:236.00px;font-size:9.3px;line-height:1;font-weight:700;letter-spacing:0.000px;color:#46a626;white-space:nowrap;transform:scaleX(1.0351);transform-origin:0 50%;-webkit-text-stroke:.2px #46a626;">Chris</div>
<div class="vt" style="position:absolute;left:278.70px;top:253.00px;font-size:9.4px;line-height:1;letter-spacing:0.000px;color:#111;white-space:nowrap;transform:scaleX(1.0494);transform-origin:0 50%;">Wait, I'll check it down. We should also check the clustering load balance.</div>
<div style="position:absolute;left:583.70px;top:268.00px;font-size:6.4px;line-height:1;letter-spacing:0.000px;color:#777;white-space:nowrap;transform:scaleX(1.0919);transform-origin:0 50%;">4:17 PM</div>
<div style="position:absolute;left:576.10px;top:300.00px;font-size:9.3px;line-height:1;font-weight:700;letter-spacing:0.000px;color:#2a6db8;white-space:nowrap;transform:scaleX(1.0807);transform-origin:0 50%;-webkit-text-stroke:.2px #2a6db8;">admin</div>
<div class="vt" style="position:absolute;left:472.10px;top:317.00px;font-size:9.4px;line-height:1;letter-spacing:0.000px;color:#111;white-space:nowrap;transform:scaleX(1.0464);transform-origin:0 50%;">Is the secondary server is up ?</div>
<div style="position:absolute;left:579.70px;top:331.00px;font-size:6.4px;line-height:1;letter-spacing:0.000px;color:#777;white-space:nowrap;transform:scaleX(1.0919);transform-origin:0 50%;">4:16 PM</div>
<div style="position:absolute;left:576.10px;top:363.00px;font-size:9.3px;line-height:1;font-weight:700;letter-spacing:0.000px;color:#2a6db8;white-space:nowrap;transform:scaleX(1.0807);transform-origin:0 50%;-webkit-text-stroke:.2px #2a6db8;">admin</div>
<div class="vt" style="position:absolute;left:518.30px;top:380.00px;font-size:9.4px;line-height:1;letter-spacing:0.000px;color:#111;white-space:nowrap;transform:scaleX(1.0548);transform-origin:0 50%;">He will join us soon.</div>
<div style="position:absolute;left:579.70px;top:394.00px;font-size:6.4px;line-height:1;letter-spacing:0.000px;color:#777;white-space:nowrap;transform:scaleX(1.0919);transform-origin:0 50%;">4:16 PM</div>
<div style="position:absolute;left:278.70px;top:426.00px;font-size:9.3px;line-height:1;font-weight:700;letter-spacing:0.000px;color:#46a626;white-space:nowrap;transform:scaleX(1.0351);transform-origin:0 50%;-webkit-text-stroke:.2px #46a626;">Chris</div>
<div class="vt" style="position:absolute;left:278.70px;top:443.00px;font-size:9.4px;line-height:1;letter-spacing:0.000px;color:#111;white-space:nowrap;transform:scaleX(1.0309);transform-origin:0 50%;">Hello. Did Steve has joined the session?</div>
<div style="position:absolute;left:583.70px;top:457.00px;font-size:6.4px;line-height:1;letter-spacing:0.000px;color:#777;white-space:nowrap;transform:scaleX(1.0919);transform-origin:0 50%;">4:15 PM</div>
</div>
<div class="abs" id="ok"></div>
<div style="position:absolute;left:9.60px;top:15.00px;font-size:12.6px;line-height:1;font-weight:700;letter-spacing:0.000px;color:#fff;white-space:nowrap;transform:scaleX(1.0037);transform-origin:0 50%;">Password Manager Pro</div>
<div style="position:absolute;left:188.20px;top:16.00px;font-size:10.3px;line-height:1;letter-spacing:0.000px;color:#fff;white-space:nowrap;-webkit-text-stroke:.32px #fff;text-shadow:0 0 1px rgba(255,255,255,.3);">Home</div>
<div style="position:absolute;left:234.50px;top:16.00px;font-size:10.3px;line-height:1;letter-spacing:0.000px;color:#fff;white-space:nowrap;transform:scaleX(0.9691);transform-origin:0 50%;-webkit-text-stroke:.32px #fff;text-shadow:0 0 1px rgba(255,255,255,.3);">Resources</div>
<div style="position:absolute;left:301.10px;top:16.00px;font-size:10.3px;line-height:1;letter-spacing:0.000px;color:#fff;white-space:nowrap;transform:scaleX(1.0176);transform-origin:0 50%;-webkit-text-stroke:.32px #fff;text-shadow:0 0 1px rgba(255,255,255,.3);">Admin</div>
<div style="position:absolute;left:349.30px;top:16.00px;font-size:10.3px;line-height:1;letter-spacing:0.000px;color:#fff;white-space:nowrap;transform:scaleX(1.0731);transform-origin:0 50%;-webkit-text-stroke:.32px #fff;text-shadow:0 0 1px rgba(255,255,255,.3);">Audit</div>
<div style="position:absolute;left:392.70px;top:16.00px;font-size:10.3px;line-height:1;letter-spacing:0.000px;color:#fff;white-space:nowrap;-webkit-text-stroke:.32px #fff;text-shadow:0 0 1px rgba(255,255,255,.3);">Reports</div>
<div style="position:absolute;left:447.70px;top:16.00px;font-size:10.3px;line-height:1;letter-spacing:0.000px;color:#fff;white-space:nowrap;transform:scaleX(0.9842);transform-origin:0 50%;-webkit-text-stroke:.32px #fff;text-shadow:0 0 1px rgba(255,255,255,.3);">Personal</div>
<div style="position:absolute;left:506.70px;top:16.00px;font-size:10.3px;line-height:1;letter-spacing:0.000px;color:#fff;white-space:nowrap;-webkit-text-stroke:.32px #fff;text-shadow:0 0 1px rgba(255,255,255,.3);">Links</div>
<div style="position:absolute;left:795.70px;top:18.00px;font-size:10.2px;line-height:1;letter-spacing:0.000px;color:#666;white-space:nowrap;transform:scaleX(0.9603);transform-origin:0 50%;">Search</div>
<div class="vt" style="position:absolute;left:56.60px;top:76.00px;font-size:9.4px;line-height:1;letter-spacing:0.000px;color:#1c1c1c;white-space:nowrap;transform:scaleX(1.0239);transform-origin:0 50%;">Resource Audit</div>
<div class="vt" style="position:absolute;left:180.80px;top:76.00px;font-size:9.4px;line-height:1;letter-spacing:0.000px;color:#1c1c1c;white-space:nowrap;transform:scaleX(1.0405);transform-origin:0 50%;">User Audit</div>
<div class="vt" style="position:absolute;left:294.70px;top:76.00px;font-size:9.4px;line-height:1;letter-spacing:0.000px;color:#1c1c1c;white-space:nowrap;transform:scaleX(1.0530);transform-origin:0 50%;">Task Audit</div>
<div class="vt" style="position:absolute;left:390.40px;top:76.00px;font-size:9.4px;line-height:1;letter-spacing:0.000px;color:#1c1c1c;white-space:nowrap;transform:scaleX(0.9914);transform-origin:0 50%;">Recorded Sessions</div>
<div class="vt" style="position:absolute;left:497.70px;top:76.00px;font-size:9.4px;line-height:1;letter-spacing:-0.000px;color:#1c1c1c;white-space:nowrap;transform:scaleX(1.0137);transform-origin:0 50%;">Active Remote Sessions</div>
<div class="vt" style="position:absolute;left:28.70px;top:119.00px;font-size:8.15px;line-height:1;letter-spacing:0.065px;color:#111;white-space:nowrap;transform:scaleX(1.1000);transform-origin:0 50%;">Showing : 1 to 50 of 80</div>
<div class="vt" style="position:absolute;left:369.30px;top:119.00px;font-size:8.15px;line-height:1;letter-spacing:0.000px;color:#111;white-space:nowrap;transform:scaleX(1.0298);transform-origin:0 50%;">Page :</div>
<div style="position:absolute;left:397.90px;top:119.00px;font-size:8.15px;line-height:1;font-weight:700;letter-spacing:0.000px;color:#111;white-space:nowrap;transform:scaleX(1.2075);transform-origin:0 50%;">[1]</div>
<div class="vt" style="position:absolute;left:414.00px;top:119.00px;font-size:8.15px;line-height:1;letter-spacing:0.014px;color:#1a66b8;white-space:nowrap;transform:scaleX(1.1000);transform-origin:0 50%;">2</div>
<div class="vt" style="position:absolute;left:422.70px;top:119.00px;font-size:8.15px;line-height:1;letter-spacing:0.000px;color:#111;white-space:nowrap;">|</div>
<div class="vt" style="position:absolute;left:839.30px;top:119.00px;font-size:8.15px;line-height:1;letter-spacing:-0.000px;color:#111;white-space:nowrap;transform:scaleX(1.0761);transform-origin:0 50%;">View per page :</div>
<div class="vt" style="position:absolute;left:904.30px;top:119.00px;font-size:8.15px;line-height:1;letter-spacing:0.000px;color:#1a66b8;white-space:nowrap;transform:scaleX(1.0611);transform-origin:0 50%;">25</div>
<div style="position:absolute;left:917.30px;top:119.00px;font-size:8.15px;line-height:1;font-weight:700;letter-spacing:0.155px;color:#111;white-space:nowrap;transform:scaleX(1.2200);transform-origin:0 50%;">[50]</div>
<div class="vt" style="position:absolute;left:939.40px;top:119.00px;font-size:8.15px;line-height:1;letter-spacing:0.000px;color:#1a66b8;white-space:nowrap;transform:scaleX(1.0611);transform-origin:0 50%;">75</div>
<div class="vt" style="position:absolute;left:952.40px;top:119.00px;font-size:8.15px;line-height:1;letter-spacing:0.000px;color:#1a66b8;white-space:nowrap;transform:scaleX(1.0175);transform-origin:0 50%;">100</div>
<div style="position:absolute;left:27.00px;top:142.00px;font-size:9.0px;line-height:1;font-weight:700;letter-spacing:-0.000px;color:#111;white-space:nowrap;transform:scaleX(1.1251);transform-origin:0 50%;">Filter audits</div>
<div class="vt" style="position:absolute;left:95.10px;top:142.00px;font-size:8.8px;line-height:1;letter-spacing:0.364px;color:#111;white-space:nowrap;transform:scaleX(1.1000);transform-origin:0 50%;">-- All --</div>
<div style="position:absolute;left:236.20px;top:145.00px;font-size:9.0px;line-height:1;font-weight:700;letter-spacing:0.000px;color:#111;white-space:nowrap;transform:scaleX(1.1070);transform-origin:0 50%;">Manage Custom Filters :</div>
<div class="vt" style="position:absolute;left:355.80px;top:145.00px;font-size:9.0px;line-height:1;letter-spacing:0.000px;color:#1558b0;white-space:nowrap;transform:scaleX(1.0240);transform-origin:0 50%;text-decoration:underline;">Add</div>
<div class="vt" style="position:absolute;left:379.70px;top:145.00px;font-size:9.0px;line-height:1;letter-spacing:0.000px;color:#111;white-space:nowrap;">|</div>
<div class="vt" style="position:absolute;left:388.30px;top:145.00px;font-size:9.0px;line-height:1;letter-spacing:0.000px;color:#111;white-space:nowrap;transform:scaleX(1.0377);transform-origin:0 50%;">Edit</div>
<div class="vt" style="position:absolute;left:412.30px;top:145.00px;font-size:9.0px;line-height:1;letter-spacing:0.000px;color:#111;white-space:nowrap;">|</div>
<div class="vt" style="position:absolute;left:421.10px;top:145.00px;font-size:9.0px;line-height:1;letter-spacing:0.000px;color:#111;white-space:nowrap;transform:scaleX(1.0378);transform-origin:0 50%;">Delete</div>
<div style="position:absolute;left:741.00px;top:138.00px;font-size:10.2px;line-height:1;letter-spacing:0.000px;color:#1a5fb0;white-space:nowrap;text-decoration:underline;text-underline-offset:.4px;text-decoration-thickness:.9px;">Troubleshoot Playback Issues</div>
<div style="position:absolute;left:897.80px;top:139.00px;font-size:9.0px;line-height:1;letter-spacing:0.000px;color:#123a78;white-space:nowrap;transform:scaleX(1.0744);transform-origin:0 50%;-webkit-text-stroke:.3px #123a78;">Audit Actions</div>
<div class="vt" style="position:absolute;left:28.00px;top:171.00px;font-size:9.4px;line-height:1;letter-spacing:0.000px;color:#111;white-space:nowrap;transform:scaleX(0.9860);transform-origin:0 50%;">Resource Name</div>
<div class="vt" style="position:absolute;left:146.60px;top:171.00px;font-size:9.4px;line-height:1;letter-spacing:0.000px;color:#111;white-space:nowrap;transform:scaleX(1.0114);transform-origin:0 50%;">User Account</div>
<div class="vt" style="position:absolute;left:251.80px;top:171.00px;font-size:9.4px;line-height:1;letter-spacing:0.000px;color:#111;white-space:nowrap;transform:scaleX(1.0182);transform-origin:0 50%;">Operated By</div>
<div class="vt" style="position:absolute;left:353.20px;top:171.00px;font-size:9.4px;line-height:1;letter-spacing:0.000px;color:#111;white-space:nowrap;transform:scaleX(1.0183);transform-origin:0 50%;">IP Address</div>
<div class="vt" style="position:absolute;left:523.10px;top:171.00px;font-size:9.4px;line-height:1;letter-spacing:0.000px;color:#111;white-space:nowrap;transform:scaleX(1.0272);transform-origin:0 50%;">Status</div>
<div class="vt" style="position:absolute;left:569.90px;top:171.00px;font-size:9.4px;line-height:1;letter-spacing:0.000px;color:#111;white-space:nowrap;transform:scaleX(1.0361);transform-origin:0 50%;">Time Stamp</div>
<div class="vt" style="position:absolute;left:705.10px;top:171.00px;font-size:9.4px;line-height:1;letter-spacing:0.000px;color:#111;white-space:nowrap;transform:scaleX(0.9465);transform-origin:0 50%;">Reason</div>
<div class="vt" style="position:absolute;left:846.30px;top:171.00px;font-size:9.4px;line-height:1;letter-spacing:0.000px;color:#111;white-space:nowrap;transform:scaleX(0.9699);transform-origin:0 50%;">Play</div>
<div class="vt" style="position:absolute;left:876.70px;top:171.00px;font-size:9.4px;line-height:1;letter-spacing:0.000px;color:#111;white-space:nowrap;">Chat Log</div>
<div style="position:absolute;left:260.70px;top:206.00px;font-size:10.0px;line-height:1;letter-spacing:0.000px;color:#fff;white-space:nowrap;transform:scaleX(1.0346);transform-origin:0 50%;-webkit-text-stroke:.2px #fff;">Chat Log</div>
<div style="position:absolute;left:435.70px;top:470.00px;font-size:9.8px;line-height:1;font-weight:700;letter-spacing:0.000px;color:#0b2a5e;white-space:nowrap;transform:scaleX(0.8978);transform-origin:0 50%;-webkit-text-stroke:.25px #0b2a5e;">OK</div>

<!-- arrow -->
<svg class="abs" style="left:0;top:0" width="1000" height="558" viewBox="0 0 1000 558">
<path d="M887 205.5 L636.5 242.8" stroke="#f31a22" stroke-width="4.3" fill="none"/>
<path d="M625.2 244 L635.4 233.8 L638.2 251.2 Z" fill="#f31a22"/>
</svg>
</div>
</body>
</html>
